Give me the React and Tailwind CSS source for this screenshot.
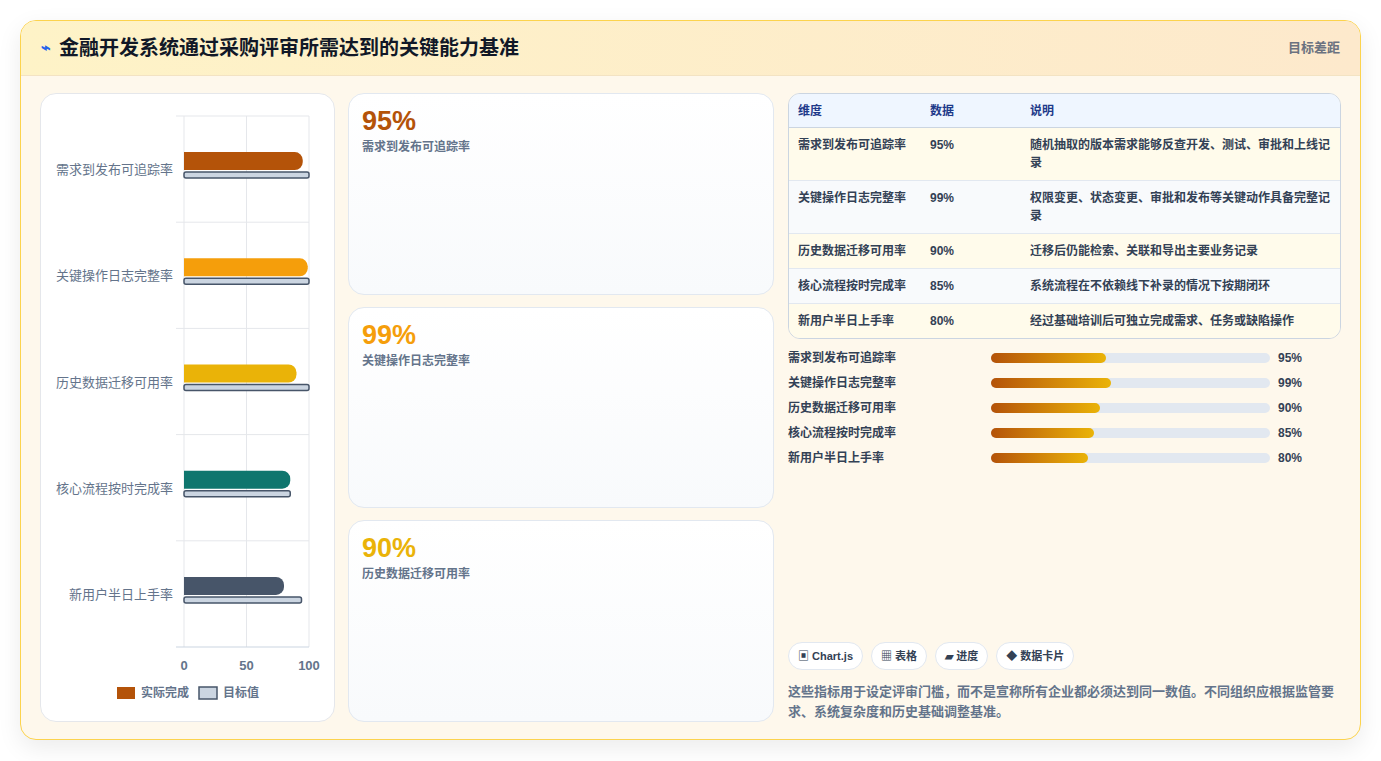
const F = { fontFamily: '"Liberation Sans","Noto Sans CJK SC",sans-serif' };
const rows = [
  { n: "需求到发布可追踪率", v: 95, t: 100, c: "#b45309", d: "随机抽取的版本需求能够反查开发、测试、审批和上线记录" },
  { n: "关键操作日志完整率", v: 99, t: 100, c: "#f59e0b", d: "权限变更、状态变更、审批和发布等关键动作具备完整记录" },
  { n: "历史数据迁移可用率", v: 90, t: 100, c: "#eab308", d: "迁移后仍能检索、关联和导出主要业务记录" },
  { n: "核心流程按时完成率", v: 85, t: 85, c: "#0f766e", d: "系统流程在不依赖线下补录的情况下按期闭环" },
  { n: "新用户半日上手率", v: 80, t: 94, c: "#475569", d: "经过基础培训后可独立完成需求、任务或缺陷操作" },
];
const cards = [
  { v: "95%", n: "需求到发布可追踪率", c: "text-[#b45309]" },
  { v: "99%", n: "关键操作日志完整率", c: "text-[#f59e0b]" },
  { v: "90%", n: "历史数据迁移可用率", c: "text-[#eab308]" },
];

function Chart() {
  const x0 = 143, w = 125, top = 22, band = 106.2;
  return (
    <svg width="294" height="627" style={F}>
      {[0, 50, 100].map((v) => (
        <line key={v} x1={x0 + (v * w) / 100} x2={x0 + (v * w) / 100} y1={top} y2={553} stroke="#e5e7eb" />
      ))}
      {[0, 1, 2, 3, 4, 5].map((i) => (
        <line key={i} x1={135} x2={268} y1={top + i * band} y2={top + i * band} stroke={i === 5 ? "#cbd5e1" : "#e5e7eb"} />
      ))}
      {rows.map((r, i) => {
        const cy = top + band * i + band / 2;
        return (
          <g key={i}>
            <text x={132} y={cy + 5} textAnchor="end" fontSize="13" fill="#64748b">{r.n}</text>
            <path d={`M${x0} ${cy - 17} H${x0 + (r.v * w) / 100 - 8} a8 8 0 0 1 8 8 v2 a8 8 0 0 1 -8 8 H${x0} Z`} fill={r.c} />
            <rect x={x0} y={cy + 3} width={(r.t * w) / 100} height={6} rx={2} fill="#cbd5e1" stroke="#475569" strokeWidth="1.5" />
          </g>
        );
      })}
      {[0, 50, 100].map((v) => (
        <text key={v} x={x0 + (v * w) / 100} y={576} textAnchor="middle" fontSize="13" fontWeight="bold" fill="#64748b">{v}</text>
      ))}
      <rect x={76} y={593} width={18} height={12} fill="#b45309" />
      <text x={100} y={603} fontSize="12" fontWeight="bold" fill="#64748b">实际完成</text>
      <rect x={158} y={593} width={18} height={12} fill="#cbd5e1" stroke="#475569" strokeWidth="1.5" />
      <text x={182} y={603} fontSize="12" fontWeight="bold" fill="#64748b">目标值</text>
    </svg>
  );
}

export default function App() {
  return (
    <div className="w-[1381px] h-[761px] bg-white p-5" style={F}>
      <div className="h-[720px] rounded-2xl border border-[#fcd34d] bg-[#fef8ec] shadow-[0_8px_24px_rgba(0,0,0,0.08)] overflow-hidden flex flex-col">
        <div className="h-[55px] shrink-0 flex items-center justify-between px-5 bg-gradient-to-r from-[#fef3c7] to-[#fde9cc] border-b border-[#f3e3c3]">
          <div className="flex items-center gap-2">
            <span className="text-[#2563eb] text-base font-bold">⌁</span>
            <span className="text-[20px] font-bold text-[#111827]">金融开发系统通过采购评审所需达到的关键能力基准</span>
          </div>
          <span className="text-[13px] font-bold text-[#6b7280]">目标差距</span>
        </div>
        <div className="flex-1 flex gap-[13px] px-[19px] pt-[17px] pb-[19px]">
          <div className="w-[295px] rounded-2xl border border-[#e5e7eb] bg-white">
            <Chart />
          </div>
          <div className="w-[426px] flex flex-col gap-[12px]">
            {cards.map((c) => (
              <div key={c.v} className="flex-1 rounded-2xl border border-[#e2e8f0] bg-gradient-to-b from-white to-[#f8fafc] px-[13px] pt-[10px]">
                <div className={`text-[27px] font-bold leading-[34px] ${c.c}`}>{c.v}</div>
                <div className="text-xs font-bold text-[#64748b] mt-[1px]">{c.n}</div>
              </div>
            ))}
          </div>
          <div className="flex-1 flex flex-col pl-[1px]">
            <div className="rounded-xl border border-[#cbd5e1] overflow-hidden text-xs">
              <div className="flex h-[34px] items-center bg-[#eff6ff] border-b border-[#cbd5e1] font-bold text-[#1e3a8a]">
                <div className="w-[141px] pl-[9px]">维度</div>
                <div className="w-[100px]">数据</div>
                <div className="flex-1">说明</div>
              </div>
              {rows.map((r, i) => (
                <div key={i} className={`flex py-[8px] leading-[18px] font-bold text-[#334155] ${i < 4 ? "border-b border-[#e2e8f0]" : ""} ${i % 2 ? "bg-[#f8fafc]" : "bg-[#fffbeb]"}`}>
                  <div className="w-[141px] pl-[9px]">{r.n}</div>
                  <div className="w-[100px]">{r.v}%</div>
                  <div className="flex-1 pr-2">{r.d}</div>
                </div>
              ))}
            </div>
            <div className="mt-[10px] flex flex-col gap-[7px]">
              {rows.map((r, i) => (
                <div key={i} className="flex items-center h-[18px] text-xs font-bold text-[#334155]">
                  <div className="w-[203px]">{r.n}</div>
                  <div className="w-[279px] h-[10px] rounded-full bg-[#e2e8f0]">
                    <div className="h-full rounded-full bg-gradient-to-r from-[#b45309] to-[#eab308]" style={{ width: `${(r.v * 0.433).toFixed(1)}%` }} />
                  </div>
                  <div className="ml-2">{r.v}%</div>
                </div>
              ))}
            </div>
            <div className="flex-1" />
            <div className="flex gap-2 text-[11px] font-bold text-[#334155]">
              {["▣ Chart.js", "▦ 表格", "▰ 进度", "◆ 数据卡片"].map((t) => (
                <span key={t} className="h-[28px] px-[9px] flex items-center rounded-full border border-[#e2e8f0] bg-white">{t}</span>
              ))}
            </div>
            <p className="mt-[12px] text-[13px] font-bold leading-[20px] text-[#64748b]">这些指标用于设定评审门槛，而不是宣称所有企业都必须达到同一数值。不同组织应根据监管要求、系统复杂度和历史基础调整基准。</p>
          </div>
        </div>
      </div>
    </div>
  );
}
